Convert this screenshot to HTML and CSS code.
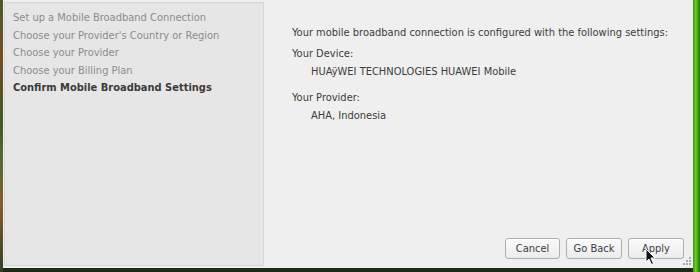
FILE: index.html
```html
<!DOCTYPE html>
<html>
<head>
<meta charset="utf-8">
<link rel="stylesheet" href="styles.css">
</head>
<body>
<div class="desktop">
  <div class="edge-left"></div>
  <div class="window">
    <div class="sidebar">
      <div class="step">Set up a Mobile Broadband Connection</div>
      <div class="step">Choose your Provider's Country or Region</div>
      <div class="step">Choose your Provider</div>
      <div class="step">Choose your Billing Plan</div>
      <div class="step current">Confirm Mobile Broadband Settings</div>
    </div>
    <div class="content">
      <div class="summary">
        <p class="intro">Your mobile broadband connection is configured with the following settings:</p>
        <p class="label">Your Device:</p>
        <p class="value">HUAÿWEI TECHNOLOGIES HUAWEI Mobile</p>
        <p class="label gap">Your Provider:</p>
        <p class="value">AHA, Indonesia</p>
      </div>
      <div class="buttons">
        <button class="btn cancel">Cancel</button>
        <button class="btn">Go Back</button>
        <button class="btn">Apply
          <svg class="cursor" width="12" height="18" viewBox="0 0 12 18"><path d="M1 1 L1 14 L4 11 L6.5 16.5 L8.5 15.5 L6 10 L10 10 Z" fill="#111" stroke="#fff" stroke-width="1"/></svg>
        </button>
      </div>
      <div class="grip">
        <svg width="8" height="8" viewBox="0 0 8 8" fill="#a9a9a9"><rect x="6" y="0" width="2" height="2"/><rect x="3" y="3" width="2" height="2"/><rect x="6" y="3" width="2" height="2"/><rect x="0" y="6" width="2" height="2"/><rect x="3" y="6" width="2" height="2"/><rect x="6" y="6" width="2" height="2"/></svg>
      </div>
    </div>
  </div>
  <div class="edge-right"></div>
</div>
</body>
</html>
```
FILE: styles.css
```css
html, body {
  margin: 0;
  padding: 0;
  width: 700px;
  height: 272px;
  overflow: hidden;
  background: #1d2a16;
}
.desktop {
  display: flex;
  width: 700px;
  height: 272px;
  align-items: flex-start;
}
.edge-left {
  width: 3px;
  height: 272px;
  background: linear-gradient(180deg, #4a5a2a 0%, #7a4a20 20%, #3d5a26 45%, #556b33 60%, #8a5a2a 75%, #2f4420 100%);
}
.edge-right {
  width: 7px;
  height: 272px;
  background: linear-gradient(90deg, #3f8f1c 0%, #6fce2c 40%, #3a9d14 70%, #2a7010 100%);
}
.window {
  width: 690px;
  height: 268px;
  background: #efefef;
  display: flex;
  box-sizing: border-box;
  padding: 2px 0 2px 1px;
  font-family: "DejaVu Sans Condensed", "DejaVu Sans", sans-serif;
  font-stretch: condensed;
  font-size: 11px;
}
.sidebar {
  width: 260px;
  box-sizing: border-box;
  background: #e6e6e6;
  border: 1px solid #d6d6d6;
  padding: 6px 0 0 8px;
  flex-shrink: 0;
}
.step {
  color: #8c8c8c;
  line-height: 17.5px;
  white-space: nowrap;
}
.step.current {
  color: #3a3a3a;
  font-weight: bold;
}
.content {
  flex: 1;
  display: flex;
  flex-direction: column;
  padding: 0 0 0 28px;
  position: relative;
}
.summary {
  flex: 1;
  color: #3c3c3c;
}
.summary p {
  margin: 0;
  line-height: 18px;
  white-space: nowrap;
}
.intro {
  margin-top: 22px !important;
  padding-bottom: 3px;
}
.value {
  padding-left: 19px;
}
.gap {
  margin-top: 8px !important;
}
.buttons {
  display: flex;
  justify-content: flex-end;
  gap: 6px;
  padding: 0 9px 7px 0;
}
.btn {
  height: 21px;
  width: 56px;
  padding: 0;
  font-family: "DejaVu Sans Condensed", "DejaVu Sans", sans-serif;
  font-stretch: condensed;
  font-size: 11px;
  color: #3c3c3c;
  border: 1px solid #aeaeae;
  border-radius: 3px;
  background: linear-gradient(180deg, #fafafa 0%, #ececec 100%);
  box-shadow: inset 0 1px 0 #ffffff;
  position: relative;
}
.cancel {
  width: 55px;
}
.cursor {
  position: absolute;
  left: 16px;
  top: 9px;
}
.grip {
  position: absolute;
  right: 2px;
  bottom: 1px;
  width: 8px;
  height: 8px;
  line-height: 0;
}
```
